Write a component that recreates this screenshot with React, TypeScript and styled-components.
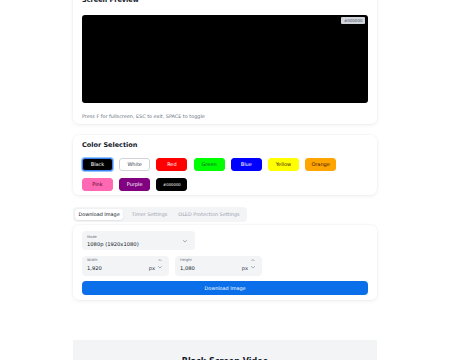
import styled, { createGlobalStyle } from 'styled-components';

const GlobalStyle = createGlobalStyle`
  html, body {
    margin: 0;
    padding: 0;
    background: #ffffff;
    font-family: "DejaVu Sans", "Noto Sans", sans-serif;
    color: #111827;
    overflow: hidden;
  }
  * { box-sizing: border-box; }
`;

interface Swatch {
  name: string;
  bg: string;
  fg: string;
  border?: string;
  selected?: boolean;
}

const swatches: Swatch[] = [
  { name: 'Black', bg: '#000000', fg: '#ffffff', border: '#3b82f6', selected: true },
  { name: 'White', bg: '#ffffff', fg: '#374151', border: '#d1d5db' },
  { name: 'Red', bg: '#ff0000', fg: '#ffffff' },
  { name: 'Green', bg: '#00ff00', fg: '#14532d' },
  { name: 'Blue', bg: '#0000ff', fg: '#ffffff' },
  { name: 'Yellow', bg: '#ffff00', fg: '#422006' },
  { name: 'Orange', bg: '#ffa500', fg: '#431407' },
  { name: 'Pink', bg: '#ff69b4', fg: '#500724' },
  { name: 'Purple', bg: '#800080', fg: '#ffffff' },
  { name: '#000000', bg: '#000000', fg: '#ffffff' },
];

function Chevron({ up }: { up?: boolean }) {
  return (
    <svg width="4" height="2.5" viewBox="0 0 10 6" fill="none">
      <path
        d={up ? 'M1 5l4-4 4 4' : 'M1 1l4 4 4-4'}
        stroke="#6b7280"
        strokeWidth="1.4"
        strokeLinecap="round"
        strokeLinejoin="round"
      />
    </svg>
  );
}

function NumberField({ label, value }: { label: string; value: string }) {
  return (
    <Field>
      <FieldTop>
        <FieldLabel>{label}</FieldLabel>
        <Chevron up />
      </FieldTop>
      <FieldRow>
        <FieldValue>{value}</FieldValue>
        <Unit>
          px <Chevron />
        </Unit>
      </FieldRow>
    </Field>
  );
}

export default function App() {
  return (
    <>
      <GlobalStyle />
      <Page>
        <PreviewCard>
          <Title>Screen Preview</Title>
          <Preview>
            <HexBadge>#000000</HexBadge>
          </Preview>
          <Hint>Press F for fullscreen, ESC to exit, SPACE to toggle</Hint>
        </PreviewCard>

        <ColorCard>
          <Title>Color Selection</Title>
          <SwatchGrid>
            {swatches.map((s) => (
              <SwatchButton
                key={s.name}
                $bg={s.bg}
                $fg={s.fg}
                $border={s.border}
                $selected={s.selected}
                $small={s.name.startsWith('#')}
              >
                {s.name}
              </SwatchButton>
            ))}
          </SwatchGrid>
        </ColorCard>

        <Tabs>
          <Tab $active>Download Image</Tab>
          <Tab>Timer Settings</Tab>
          <Tab>OLED Protection Settings</Tab>
        </Tabs>

        <DownloadCard>
          <Select>
            <div>
              <FieldLabel>Mode</FieldLabel>
              <SelectValue>1080p (1920x1080)</SelectValue>
            </div>
            <Chevron />
          </Select>
          <SizeRow>
            <NumberField label="Width" value="1,920" />
            <NumberField label="Height" value="1,080" />
          </SizeRow>
          <DownloadButton>Download Image</DownloadButton>
        </DownloadCard>

        <VideoSection>
          <VideoTitle>Black Screen Video</VideoTitle>
        </VideoSection>
      </Page>
    </>
  );
}

const Page = styled.main`
  width: 304px;
  margin: -10px auto 0;
  display: flex;
  flex-direction: column;
`;

const Card = styled.section`
  background: #ffffff;
  border-radius: 6px;
  box-shadow: 0 0 0 0.5px rgba(0, 0, 0, 0.03), 0 1px 4px rgba(0, 0, 0, 0.07);
  padding: 5px 9px 4px;
`;

const PreviewCard = styled(Card)`
  padding-bottom: 3px;
`;

const ColorCard = styled(Card)`
  margin-top: 11px;
`;

const Title = styled.h2`
  margin: 0;
  font-size: 6.5px;
  line-height: 10px;
  font-weight: 700;
  color: #111827;
`;

const Preview = styled.div`
  margin-top: 10px;
  height: 88px;
  background: #000000;
  border-radius: 3px;
  position: relative;
`;

const HexBadge = styled.span`
  position: absolute;
  top: 2px;
  right: 3px;
  background: #d1d5db;
  color: #4b5563;
  font-size: 4px;
  line-height: 7px;
  padding: 0 2.5px;
  border-radius: 1px;
`;

const Hint = styled.p`
  margin: 8px 0 0;
  font-size: 4.9px;
  line-height: 10px;
  color: #6b7280;
`;

const SwatchGrid = styled.div`
  margin-top: 8px;
  display: flex;
  flex-wrap: wrap;
  column-gap: 6.2px;
  row-gap: 7px;
  width: 260px;
`;

const SwatchButton = styled.button<{
  $bg: string;
  $fg: string;
  $border?: string;
  $selected?: boolean;
  $small?: boolean;
}>`
  width: 31px;
  height: 13px;
  padding: 0;
  border-radius: 3px;
  background: ${(p) => p.$bg};
  color: ${(p) => p.$fg};
  border: 1px solid ${(p) => p.$border ?? p.$bg};
  box-shadow: ${(p) => (p.$selected ? '0 0 0 1px #93c5fd' : 'none')};
  font-family: inherit;
  font-size: ${(p) => (p.$small ? '3.8px' : '5px')};
  line-height: 1;
  cursor: pointer;
`;

const Tabs = styled.div`
  margin-top: 12px;
  align-self: flex-start;
  display: flex;
  gap: 2px;
  padding: 2px;
  background: #f3f4f6;
  border-radius: 4px;
`;

const Tab = styled.button<{ $active?: boolean }>`
  border: none;
  border-radius: 3px;
  background: ${(p) => (p.$active ? '#ffffff' : 'transparent')};
  box-shadow: ${(p) => (p.$active ? '0 0.5px 1.5px rgba(0,0,0,0.12)' : 'none')};
  color: ${(p) => (p.$active ? '#111827' : '#9ca3af')};
  font-family: inherit;
  font-size: 4.9px;
  line-height: 11px;
  padding: 0 3.5px;
  margin-right: ${(p) => (p.$active ? '3px' : '2px')};
  cursor: pointer;
`;

const DownloadCard = styled(Card)`
  margin-top: 3px;
  padding: 6px 9px 5px;
  display: flex;
  flex-direction: column;
  gap: 5.5px;
`;

const Select = styled.div`
  width: 113px;
  height: 19px;
  background: #f3f4f6;
  border-radius: 4px;
  padding: 2px 8px 0 5px;
  display: flex;
  align-items: center;
  justify-content: space-between;
`;

const FieldLabel = styled.div`
  font-size: 3.6px;
  line-height: 5px;
  color: #6b7280;
`;

const SelectValue = styled.div`
  font-size: 5.2px;
  line-height: 8px;
  color: #111827;
`;

const SizeRow = styled.div`
  display: flex;
  gap: 6px;
`;

const Field = styled.div`
  width: 87px;
  height: 20px;
  background: #f3f4f6;
  border-radius: 4px;
  padding: 2px 7px 0 5px;
`;

const FieldTop = styled.div`
  display: flex;
  justify-content: space-between;
  align-items: center;
`;

const FieldRow = styled.div`
  display: flex;
  justify-content: space-between;
  align-items: center;
  height: 10px;
`;

const FieldValue = styled.span`
  font-size: 5.2px;
  color: #111827;
`;

const Unit = styled.span`
  display: flex;
  align-items: center;
  gap: 3px;
  font-size: 5.2px;
  color: #374151;
`;

const DownloadButton = styled.button`
  height: 14px;
  border: none;
  border-radius: 4px;
  background: #0a6fe8;
  color: #ffffff;
  font-family: inherit;
  font-size: 4.9px;
  cursor: pointer;
`;

const VideoSection = styled.section`
  margin-top: 40px;
  background: #f3f4f6;
  height: 60px;
  padding-top: 17px;
  text-align: center;
`;

const VideoTitle = styled.h2`
  margin: 0;
  font-size: 8px;
  line-height: 10px;
  font-weight: 700;
  color: #111827;
`;
